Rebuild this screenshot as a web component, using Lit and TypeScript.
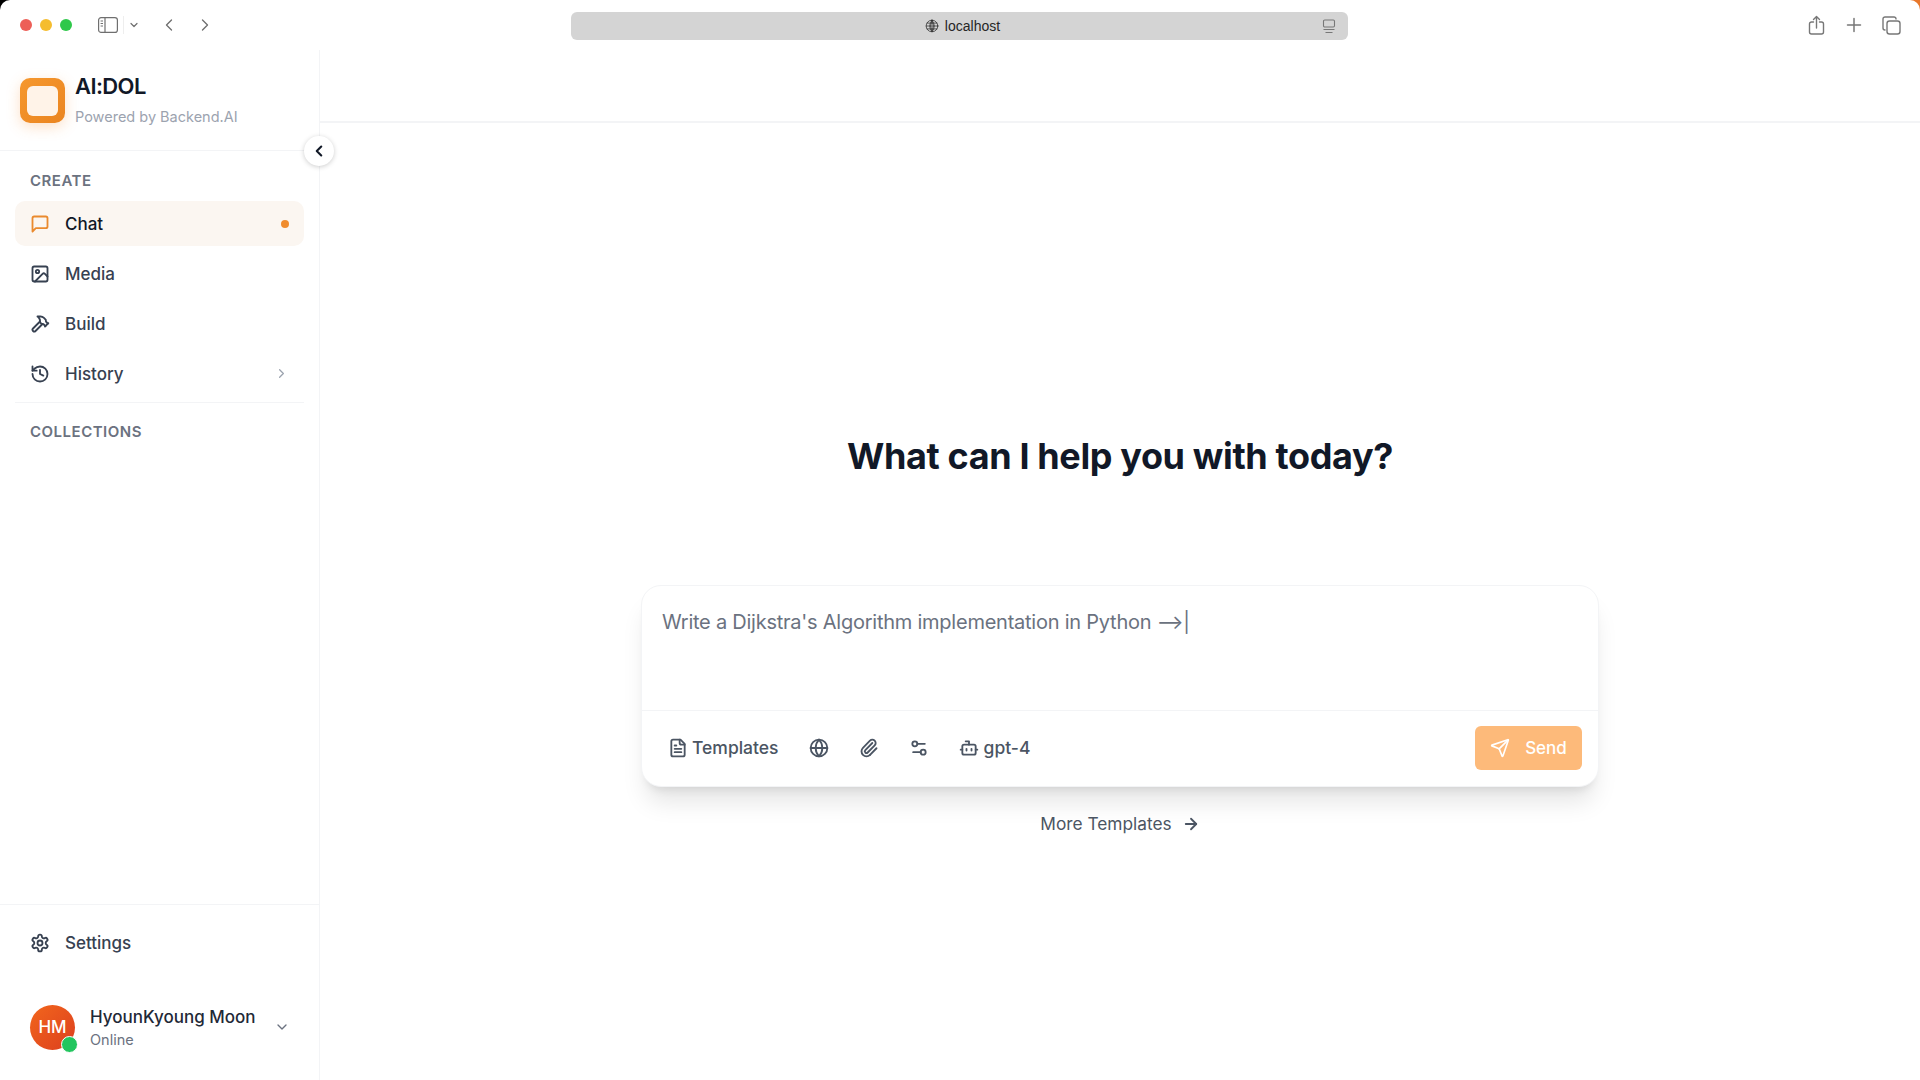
import { LitElement, html, css, svg } from "lit";
import { customElement } from "lit/decorators.js";

const ic = (size: number, body: unknown, sw = 2) => html`<svg width=${size} height=${size} viewBox="0 0 24 24" fill="none" stroke="currentColor" stroke-width=${sw} stroke-linecap="round" stroke-linejoin="round">${body}</svg>`;

const icons = {
  chat: svg`<path d="M21 15a2 2 0 0 1-2 2H7l-4 4V5a2 2 0 0 1 2-2h14a2 2 0 0 1 2 2z"/>`,
  image: svg`<rect x="3" y="3" width="18" height="18" rx="2"/><circle cx="9" cy="9" r="2"/><path d="m21 15-3.086-3.086a2 2 0 0 0-2.828 0L6 21"/>`,
  hammer: svg`<path d="m15 12-8.373 8.373a1 1 0 1 1-3-3L12 9"/><path d="m18 15 4-4"/><path d="m21.5 11.5-1.914-1.914A2 2 0 0 1 19 8.172V7l-2.26-2.26a6 6 0 0 0-4.202-1.756L9 2.96l.92.82A6.18 6.18 0 0 1 12 8.4V10l2 2h1.172a2 2 0 0 1 1.414.586L18.5 14.5"/>`,
  history: svg`<path d="M3 12a9 9 0 1 0 9-9 9.75 9.75 0 0 0-6.74 2.74L3 8"/><path d="M3 3v5h5"/><path d="M12 7v5l4 2"/>`,
  gear: svg`<path d="M12.22 2h-.44a2 2 0 0 0-2 2v.18a2 2 0 0 1-1 1.73l-.43.25a2 2 0 0 1-2 0l-.15-.08a2 2 0 0 0-2.73.73l-.22.38a2 2 0 0 0 .73 2.73l.15.1a2 2 0 0 1 1 1.72v.51a2 2 0 0 1-1 1.74l-.15.09a2 2 0 0 0-.73 2.73l.22.38a2 2 0 0 0 2.73.73l.15-.08a2 2 0 0 1 2 0l.43.25a2 2 0 0 1 1 1.73V20a2 2 0 0 0 2 2h.44a2 2 0 0 0 2-2v-.18a2 2 0 0 1 1-1.73l.43-.25a2 2 0 0 1 2 0l.15.08a2 2 0 0 0 2.73-.73l.22-.39a2 2 0 0 0-.73-2.73l-.15-.08a2 2 0 0 1-1-1.74v-.5a2 2 0 0 1 1-1.74l.15-.09a2 2 0 0 0 .73-2.73l-.22-.38a2 2 0 0 0-2.73-.73l-.15.08a2 2 0 0 1-2 0l-.43-.25a2 2 0 0 1-1-1.73V4a2 2 0 0 0-2-2z"/><circle cx="12" cy="12" r="3"/>`,
  file: svg`<path d="M15 2H6a2 2 0 0 0-2 2v16a2 2 0 0 0 2 2h12a2 2 0 0 0 2-2V7Z"/><path d="M14 2v4a2 2 0 0 0 2 2h4"/><path d="M10 9H8"/><path d="M16 13H8"/><path d="M16 17H8"/>`,
  globe: svg`<circle cx="12" cy="12" r="10"/><path d="M12 2a14.5 14.5 0 0 0 0 20 14.5 14.5 0 0 0 0-20"/><path d="M2 12h20"/>`,
  clip: svg`<path d="M13.234 20.252 21 12.3"/><path d="m16 6-8.414 8.586a2 2 0 0 0 0 2.828 2 2 0 0 0 2.828 0l8.414-8.586a4 4 0 0 0 0-5.656 4 4 0 0 0-5.656 0l-8.415 8.585a6 6 0 1 0 8.486 8.486"/>`,
  sliders: svg`<path d="M14 17H5"/><path d="M19 7h-9"/><circle cx="17" cy="17" r="3"/><circle cx="7" cy="7" r="3"/>`,
  bot: svg`<path d="M12 8V4H8"/><rect x="4" y="8" width="16" height="12" rx="2"/><path d="M2 14h2"/><path d="M20 14h2"/><path d="M15 13v2"/><path d="M9 13v2"/>`,
  send: svg`<path d="M14.536 21.686a.5.5 0 0 0 .937-.024l6.5-19a.496.496 0 0 0-.635-.635l-19 6.5a.5.5 0 0 0-.024.937l7.93 3.18a2 2 0 0 1 1.112 1.11z"/><path d="m21.854 2.147-10.94 10.939"/>`,
  arrow: svg`<path d="M5 12h14"/><path d="m12 5 7 7-7 7"/>`,
  left: svg`<path d="m15 18-6-6 6-6"/>`,
  right: svg`<path d="m9 18 6-6-6-6"/>`,
  down: svg`<path d="m6 9 6 6 6-6"/>`,
};

@customElement("app-root")
export class AppRoot extends LitElement {
  static styles = css`
    :host { display: block; width: 1920px; height: 1080px; overflow: hidden; font-family: Inter, "Liberation Sans", sans-serif; background: linear-gradient(90deg, #000 0 50%, #e8772a 50% 100%); color: #111827; }
    .window { width: 100%; height: 100%; background: #fff; border-radius: 10px 10px 0 0; display: flex; flex-direction: column; overflow: hidden; position: relative; }

    .titlebar { height: 50px; flex: none; display: flex; align-items: center; position: relative; color: #6f6f6f; }
    .lights { display: flex; gap: 8px; margin-left: 20px; }
    .light { width: 12px; height: 12px; border-radius: 50%; }
    .tools { display: flex; align-items: center; margin-left: 26px; }
    .tools .sep { width: 1px; height: 18px; background: #eee; margin: 0 4px 0 5px; }
    .nav-btn { display: flex; }
    .nav-back { margin-left: 19px; }
    .nav-forward { margin-left: 16px; }
    .url-wrap { position: absolute; left: 571px; top: 12px; width: 777px; height: 28px; box-sizing: border-box; padding-left: 6px; background: #d4d4d4; border-radius: 6px; display: flex; align-items: center; justify-content: center; gap: 6px; font-family: "Liberation Sans", sans-serif; font-size: 14px; color: #262626; }
    .reader { position: absolute; right: 12px; top: 7px; display: flex; color: #777; }
    .right-tools { position: absolute; right: 0; top: 0; height: 50px; display: flex; align-items: center; gap: 19px; padding-right: 19px; }
    .right-tools svg { display: block; }

    .body { flex: 1; display: flex; min-height: 0; }
    .sidebar { width: 320px; flex: none; border-right: 1px solid #f3f4f6; box-sizing: border-box; display: flex; flex-direction: column; }
    .brand { height: 101px; flex: none; box-sizing: border-box; border-bottom: 1px solid #f3f4f6; padding: 12px 20px 0; display: flex; gap: 10px; }
    .logo { width: 45px; height: 45px; margin-top: 16px; border-radius: 10px; background: linear-gradient(135deg, #f6982e, #ea8420); box-shadow: 0 4px 14px rgba(249,146,60,.28); display: flex; align-items: center; justify-content: center; flex: none; }
    .logo i { display: block; width: 31px; height: 30px; border-radius: 6px; background: #fff3e8; }
    .brand-text { display: flex; flex-direction: column; }
    .brand-name { font-size: 22px; line-height: 30px; font-weight: 600; letter-spacing: -0.6px; color: #111827; margin-top: 9px; }
    .brand-sub { font-size: 14.5px; line-height: 20px; color: #9ca3af; margin-top: 6px; }

    .nav { padding: 0 15px; flex: 1; }
    .section { font-size: 15px; line-height: 20px; font-weight: 600; letter-spacing: .5px; color: #6b7280; padding-left: 15px; }
    .create { margin-top: 20px; margin-bottom: 10px; }
    .collections { margin-top: 19px; }
    .items { display: flex; flex-direction: column; gap: 5px; padding-bottom: 6px; border-bottom: 1px solid #f3f4f6; }
    .item { height: 45px; border-radius: 10px; display: flex; align-items: center; padding: 0 15px; gap: 15px; font-size: 17px; font-weight: 500; color: #374151; }
    .item svg { flex: none; display: block; }
    .item.active { background: #fbf6f1; color: #111827; }
    .item.active svg { color: #ea8a2e; }
    .item .dot { width: 8px; height: 8px; border-radius: 50%; background: #f08c2e; margin-left: auto; }
    .item .chev { margin-left: auto; color: #9ca3af; margin-right: 0; }

    .footer { flex: none; }
    .settings { border-top: 1px solid #f3f4f6; padding: 15px 15px 0; }
    .settings .item { padding-left: 15px; }
    .user { display: flex; align-items: center; padding: 0 30px; margin-top: 39px; height: 46px; margin-bottom: 30px; position: relative; }
    .avatar { width: 45px; height: 45px; border-radius: 50%; background: linear-gradient(135deg, #f2661c, #dc3f1f); color: #fff; display: flex; align-items: center; justify-content: center; font-size: 17px; font-weight: 500; flex: none; position: relative; }
    .status { position: absolute; right: -3px; bottom: -3px; width: 15px; height: 15px; border-radius: 50%; background: #22c55e; border: 1px solid #fff; }
    .user-text { margin-left: 15px; margin-top: 1px; display: flex; flex-direction: column; }
    .user-name { font-size: 17px; line-height: 22px; font-weight: 500; color: #1f2937; white-space: nowrap; }
    .user-status { font-size: 14.5px; line-height: 20px; color: #6b7280; margin-top: 2px; }
    .user > svg { margin-left: auto; color: #6b7280; margin-right: -1px; }

    .main { flex: 1; min-width: 0; display: flex; flex-direction: column; align-items: center; background: #fff; }
    .topbar { align-self: stretch; height: 73px; flex: none; box-sizing: border-box; border-bottom: 2px solid #f3f4f6; }
    h1 { margin: 0; margin-top: 308px; font-size: 36px; line-height: 50px; font-weight: 700; letter-spacing: -0.37px; color: #111827; }
    .card { width: 958px; height: 202px; margin-top: 104px; box-sizing: border-box; border: 1px solid #f3f4f6; border-radius: 20px; background: #fff; box-shadow: 0 20px 25px -5px rgba(0,0,0,.1), 0 8px 10px -6px rgba(0,0,0,.1); display: flex; flex-direction: column; }
    .input { height: 125px; flex: none; box-sizing: border-box; border-bottom: 1px solid #f3f4f6; padding: 22px 20px 0; font-size: 20px; line-height: 28px; letter-spacing: -0.24px; color: #6b7280; white-space: nowrap; }
    .actions { flex: 1; display: flex; align-items: center; padding: 0 16px 2px 26px; color: #4b5563; font-size: 17.5px; font-weight: 500; }
    .act { display: flex; align-items: center; color: #4b5563; }
    .act svg { display: block; flex: none; }
    .act-text { gap: 4px; }
    .act-icon { margin-left: 30px; }
    .act-first { margin-left: 30px; }
    .act-model { margin-left: 30px; gap: 5px; }
    .send { margin-left: auto; width: 107px; height: 44px; background: #fdba7a; border-radius: 6px; color: #fff; display: flex; align-items: center; justify-content: center; gap: 15px; font-size: 17px; font-weight: 500; }
    .more { display: flex; align-items: center; gap: 10px; margin-top: 25px; font-size: 17.3px; line-height: 24px; font-weight: 400; color: #4b5563; }

    .collapse { position: absolute; left: 304px; top: 136px; width: 30px; height: 30px; border-radius: 50%; background: #fff; box-shadow: 0 1px 5px rgba(0,0,0,.2); display: flex; align-items: center; justify-content: center; color: #111827; }
  `;

  render() {
    return html`<div class="window">
      <div class="titlebar">
        <div class="lights">
          <span class="light" style="background:#ed5f57"></span>
          <span class="light" style="background:#f5bd2f"></span>
          <span class="light" style="background:#2fc84a"></span>
        </div>
        <div class="tools">
          <svg width="20" height="16" viewBox="0 0 20 16" fill="none" stroke="currentColor" stroke-width="1.2"><rect x=".6" y=".6" width="18.8" height="14.8" rx="2.5"/><path d="M7 .6v14.8"/><path d="M2.6 4h2.4M2.6 6.5h2.4M2.6 9h2.4" stroke-width="1"/></svg>
          <span class="sep"></span>
          ${ic(12, icons.down, 2.4)}
          <span class="nav-btn nav-back">${ic(20, icons.left, 1.6)}</span>
          <span class="nav-btn nav-forward">${ic(20, icons.right, 1.6)}</span>
        </div>
        <div class="url-wrap">
          ${ic(14, svg`<circle cx="12" cy="12" r="10"/><path d="M12 2a14.5 14.5 0 0 0 0 20 14.5 14.5 0 0 0 0-20"/><path d="M12 2a7 14.5 0 0 0 0 20 7 14.5 0 0 0 0-20" /><path d="M2 12h20M3.5 7h17M3.5 17h17"/>`, 1.2)}
          <span>localhost</span>
          <span class="reader"><svg width="14" height="15" viewBox="0 0 14 15" fill="none" stroke="currentColor" stroke-width="1.1"><rect x="1.5" y="1" width="11" height="7" rx="1.2"/><path d="M1.5 10.5h11M3.5 13.5h7"/></svg></span>
        </div>
        <div class="right-tools">
          <svg width="18" height="20" viewBox="0 0 18 20" fill="none" stroke="#777" stroke-width="1.4" stroke-linecap="round" stroke-linejoin="round"><path d="M5.5 7H3.5a2 2 0 0 0-2 2v8a2 2 0 0 0 2 2h10a2 2 0 0 0 2-2V9a2 2 0 0 0-2-2h-2"/><path d="M8.5 13V1.5M5.5 4.5l3-3 3 3"/></svg>
          <svg width="18" height="20" viewBox="0 0 18 20" fill="none" stroke="#777" stroke-width="1.5" stroke-linecap="round"><path d="M9 3.500v13M2.500 10h13"/></svg>
          <svg width="19" height="19" viewBox="0 0 19 19" fill="none" stroke="#777" stroke-width="1.4"><path d="M14 3.500V3a2 2 0 0 0-2-2H3a2 2 0 0 0-2 2v9a2 2 0 0 0 2 2h.5"/><rect x="5" y="5" width="13" height="13" rx="2.500"/></svg>
        </div>
      </div>

      <div class="body">
        <aside class="sidebar">
          <div class="brand">
            <div class="logo"><i></i></div>
            <div class="brand-text">
              <div class="brand-name">AI:DOL</div>
              <div class="brand-sub">Powered by Backend.AI</div>
            </div>
          </div>
          <div class="nav">
            <div class="section create">CREATE</div>
            <div class="items">
              <div class="item active">${ic(20, icons.chat, 2.2)}<span>Chat</span><span class="dot"></span></div>
              <div class="item">${ic(20, icons.image, 2.2)}<span>Media</span></div>
              <div class="item">${ic(20, icons.hammer, 2.2)}<span>Build</span></div>
              <div class="item">${ic(20, icons.history, 2.2)}<span>History</span><span class="chev">${ic(15, icons.right)}</span></div>
            </div>
            <div class="section collections">COLLECTIONS</div>
          </div>
          <div class="footer">
            <div class="settings"><div class="item">${ic(20, icons.gear, 2.2)}<span>Settings</span></div></div>
            <div class="user">
              <div class="avatar">HM<span class="status"></span></div>
              <div class="user-text">
                <div class="user-name">HyounKyoung Moon</div>
                <div class="user-status">Online</div>
              </div>
              ${ic(16, icons.down)}
            </div>
          </div>
        </aside>
        <main class="main">
          <div class="topbar"></div>
          <h1>What can I help you with today?</h1>
          <div class="card">
            <div class="input">Write a Dijkstra's Algorithm implementation in Python ⟶|</div>
            <div class="actions">
              <span class="act act-text">${ic(20, icons.file, 2.2)}<span>Templates</span></span>
              <span class="act act-first">${ic(20, icons.globe, 2.2)}</span>
              <span class="act act-icon">${ic(20, icons.clip, 2.2)}</span>
              <span class="act act-icon">${ic(20, icons.sliders, 2.2)}</span>
              <span class="act act-model">${ic(20, icons.bot, 2.2)}<span>gpt-4</span></span>
              <span class="send">${ic(20, icons.send)}<span>Send</span></span>
            </div>
          </div>
          <div class="more"><span>More Templates</span>${ic(18, icons.arrow, 2.4)}</div>
        </main>
      </div>
      <div class="collapse">${ic(18, icons.left, 2.8)}</div>
    </div>`;
  }
}
